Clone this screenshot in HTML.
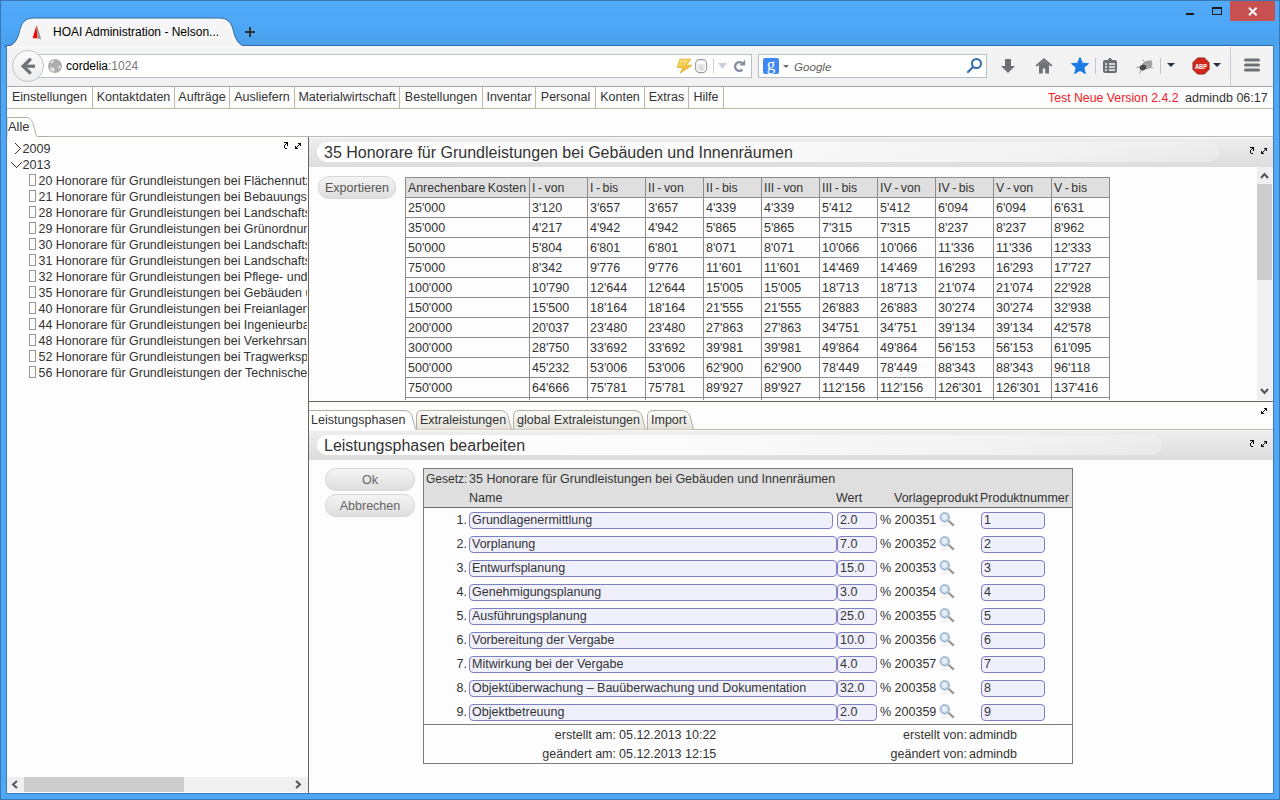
<!DOCTYPE html>
<html><head><meta charset="utf-8">
<style>
*{box-sizing:border-box;margin:0;padding:0}
html,body{width:1280px;height:800px;overflow:hidden}
body{position:relative;background:#4fa7f5;font-family:"Liberation Sans",sans-serif;font-size:12.5px;color:#333}
.a{position:absolute}
.frame{left:0;top:0;width:1280px;height:800px;border:1px solid #3a78b5}
.inner{left:6px;top:45px;width:1268px;height:749px;border:1px solid #3a7cbc;border-top-color:#2b69a6}
.tb{left:7px;top:46px;width:1266px;height:41px;background:linear-gradient(#fafafa,#f3f3f3 3px,#f1f1f1);border-bottom:1px solid #a8a8a8}
.page{left:7px;top:87px;width:1266px;height:706px;background:#fdfdfd;overflow:hidden}
.sep{width:1px;background:#bdb9aa}
.mi{top:0;height:21px;line-height:20px;text-align:center;white-space:nowrap;border-right:1px solid #bdb9aa}
.tri{width:0;height:0;border-left:4px solid transparent;border-right:4px solid transparent;border-top:4px solid #333}
.ico{stroke:#000;fill:none}
</style></head><body>
<div class="a frame"></div>
<div class="a" style="left:1px;top:1px;width:1278px;height:44px;background:linear-gradient(#52aaf8,#4ca6f6 60%,#4aa0ea)"></div>
<div class="a inner"></div>

<!-- browser tab -->
<svg class="a" style="left:0;top:0" width="280" height="47">
<path d="M4 47 C13 47 17 41 19 33 C21.5 22 25 18 34 18 L219 18 C228 18 231.5 22 234 33 C236 41 240 47 249 47 Z" fill="#f5f5f5"/>
<path d="M4 46.5 C13 46.5 17 41 19 33 C21.5 22 25 18 34 18 L219 18 C228 18 231.5 22 234 33 C236 41 240 46.5 249 46.5" fill="none" stroke="#3469a3" stroke-width="1"/>
<path d="M7 46.5 H245" stroke="#f4f4f4" stroke-width="1"/>
<path d="M36.6 25 L37.2 38.2 L32.6 38.2 Z" fill="#f00"/>
<path d="M36.8 25 L41.3 39.6 L37.2 38.2 Z" fill="#9a9a9a"/>
<path d="M245 32 h10 M250 27 v10" stroke="#333" stroke-width="2"/>
</svg>
<div class="a" style="left:53px;top:25px;font-size:12px;color:#000;white-space:nowrap">HOAI Administration - Nelson...</div>

<!-- window controls -->
<div class="a" style="left:1186px;top:13px;width:8px;height:2px;background:#1b1b1b"></div>
<div class="a" style="left:1212px;top:7px;width:10px;height:8px;border:1px solid #1b1b1b;border-top-width:2px"></div>
<div class="a" style="left:1230px;top:1px;width:45px;height:20px;background:#c75050"></div>
<svg class="a" style="left:1248px;top:7px" width="10" height="9"><path d="M1 0.8 L8.6 8.2 M8.6 0.8 L1 8.2" stroke="#fff" stroke-width="1.9"/></svg>

<!-- toolbar -->
<div class="a tb"></div>
<div class="a" style="left:37px;top:54px;width:715px;height:24px;background:#fff;border:1px solid #b5c0cd;border-left:none"></div>
<div class="a" style="left:12px;top:50px;width:32px;height:32px;border-radius:50%;background:linear-gradient(#fbfbfb,#eeeeee);border:1px solid #c4c4c4"></div>
<svg class="a" style="left:20px;top:58px" width="17" height="17"><path d="M9.8 1.8 L3.2 8.2 L9.8 14.6" stroke="#6f7378" stroke-width="3.4" stroke-linecap="round" stroke-linejoin="miter" fill="none"/><path d="M4.5 8.2 H15" stroke="#6f7378" stroke-width="3.2"/></svg>
<svg class="a" style="left:47px;top:58px" width="16" height="16"><circle cx="8" cy="8" r="7" fill="#adadad"/><path d="M3.5 4.5 Q5 2.2 7.5 2.6 Q6.5 4.2 4.5 5.8 Z" fill="#ececec"/><path d="M11.8 6.5 Q13.8 7.5 13.6 10 Q12.5 11 11.2 10.2 Q11.8 8.5 11.8 6.5 Z" fill="#e6e6e6"/><path d="M3 9.5 Q5.5 9 7.5 10.5 Q8 12.8 6 13.8 Q3.5 12.5 3 9.5 Z" fill="#ececec"/></svg>
<div class="a" style="left:66px;top:59px;font-size:12px;color:#000;white-space:nowrap">cordelia<span style="color:#777">:1024</span></div>
<!-- url bar icons -->
<svg class="a" style="left:676px;top:58px" width="72" height="17">
<defs><linearGradient id="lg1" x1="0" y1="0" x2="1" y2="1"><stop offset="0" stop-color="#fbe27a"/><stop offset="1" stop-color="#e6aa1e"/></linearGradient><linearGradient id="cg1" x1="0" y1="0" x2="1" y2="0"><stop offset="0" stop-color="#f6f6f6"/><stop offset="0.5" stop-color="#d6d6d6"/><stop offset="1" stop-color="#f0f0f0"/></linearGradient></defs>
<path d="M4 1.2 L15 1.2 L10.2 7.3 L16 7.3 L4.3 15 L7 9.5 L1.2 9.5 Z" fill="url(#lg1)" stroke="#e3b22c" stroke-width="0.9" stroke-linejoin="round"/>
<path d="M5.5 3 L11.5 3 L8 7.8" fill="none" stroke="#fff3b0" stroke-width="0.8" opacity="0.7"/>
<rect x="19.6" y="1.6" width="11" height="13" rx="4" fill="#fcfcfc" stroke="#9c9c9c" stroke-width="1.1"/>
<path d="M21 5.5 Q25.1 7.5 29.2 5.5 V12 Q25.1 13.5 21 12 Z" fill="url(#cg1)"/>
<path d="M37.5 0 V16" stroke="#ccd3db"/>
<path d="M42 5 L51 5 L46.5 11 Z" fill="#c8d0d8"/>
<path d="M66.2 5.2 A4.3 4.3 0 1 0 66.4 11.6" stroke="#8490a0" stroke-width="2.4" fill="none"/><path d="M63.4 7.6 L69.2 7.6 L69.2 1.8 Z" fill="#8490a0"/></svg>
<div class="a" style="left:758px;top:54px;width:229px;height:24px;background:#fff;border:1px solid #b5c0cd"></div>
<div class="a" style="left:763px;top:58px;width:16px;height:16px;background:#3f87f2;border-radius:2px;color:#fff;font-size:17px;line-height:14px;text-align:center;font-family:'Liberation Serif',serif">g</div>
<div class="a tri" style="left:783px;top:65px;border-width:3px;border-top-color:#666"></div>
<div class="a" style="left:794px;top:60px;font-size:11.6px;font-style:italic;color:#5e5e5e">Google</div>
<svg class="a" style="left:966px;top:57px" width="17" height="17"><circle cx="10.5" cy="6.5" r="4.5" stroke="#2e6db0" stroke-width="2" fill="none"/><path d="M7 10 L2 15" stroke="#2e6db0" stroke-width="2.2" stroke-linecap="round"/></svg>
<!-- right icons -->
<svg class="a" style="left:1000px;top:58px" width="17" height="17"><path d="M5 1 H11 V8 H15 L8 15 L1 8 H5 Z" fill="#6d7075"/></svg>
<svg class="a" style="left:1035px;top:58px" width="18" height="18"><path d="M1.2 8 L9 1.2 L16.8 8" stroke="#6f7378" stroke-width="1.8" fill="none"/><path d="M4 6.5 L9 2.8 L14 6.5 V15.5 H10.2 V10.5 H7.8 V15.5 H4 Z" fill="#6f7378"/></svg>
<svg class="a" style="left:1071px;top:57px" width="18" height="18"><path d="M9 0.5 L11.4 6.2 L17.5 6.6 L12.8 10.6 L14.3 16.6 L9 13.4 L3.7 16.6 L5.2 10.6 L0.5 6.6 L6.6 6.2 Z" fill="#1a7ae6" stroke="#1a7ae6" stroke-linejoin="round"/></svg>
<div class="a" style="left:1095px;top:58px;width:1px;height:16px;background:#c0c6cc"></div>
<svg class="a" style="left:1102px;top:57px" width="16" height="17"><rect x="1" y="3" width="14" height="13" rx="2" fill="#6d7075"/><path d="M6 3 L8 1 L10 3" fill="#6d7075" stroke="#6d7075"/><path d="M3 7 H5 M7 7 H13 M3 10 H5 M7 10 H13 M3 13 H5 M7 13 H13" stroke="#f2f2f2" stroke-width="1.3"/></svg>
<svg class="a" style="left:1136px;top:59px" width="18" height="15"><path d="M0.5 8.5 L4 8 M5 11.5 L3.5 14.5 M13 8 L17 9 M13 3 L16 1.5 M8 2.5 L7 0.5" stroke="#8a8a8a" stroke-width="0.9"/><ellipse cx="11" cy="6" rx="5.2" ry="3.4" fill="#b4b4b4" stroke="#7a7a7a" stroke-width="0.8" transform="rotate(-25 11 6)"/><ellipse cx="7" cy="8.5" rx="3.4" ry="2.8" fill="#4a4a4a" transform="rotate(-25 7 8.5)"/><path d="M9 5 L14 4 M9.5 7 L14.5 6" stroke="#777" stroke-width="0.6"/></svg>
<div class="a" style="left:1160px;top:58px;width:1px;height:16px;background:#c0c6cc"></div>
<div class="a tri" style="left:1167px;top:63px;border-left-width:4px;border-right-width:4px;border-top:4px solid #263340"></div>
<svg class="a" style="left:1192px;top:57px" width="18" height="18"><path d="M5.6 1 H12.4 L17 5.6 V12.4 L12.4 17 H5.6 L1 12.4 V5.6 Z" fill="#d0281c" stroke="#9a1c14" stroke-width="1"/><text x="9" y="11.8" font-size="7" font-weight="bold" fill="#fff" text-anchor="middle" font-family="Liberation Sans" transform="translate(9 0) scale(0.82 1) translate(-9 0)">ABP</text></svg>
<div class="a tri" style="left:1213px;top:63px;border-left-width:4px;border-right-width:4px;border-top:4px solid #263340"></div>
<div class="a" style="left:1230px;top:47px;width:1px;height:39px;background:#c8cdd2"></div>
<svg class="a" style="left:1243px;top:57px" width="18" height="16"><path d="M2.5 3 H15.5 M2.5 8 H15.5 M2.5 13 H15.5" stroke="#6d7075" stroke-width="3" stroke-linecap="round"/></svg>

<!-- page -->
<div class="a" style="left:7px;top:87px;width:1266px;height:706px;background:#fdfdfd"></div>
<div class="a" style="left:7px;top:108px;width:1266px;height:1px;background:#bdb9aa"></div>
<div class="a" style="left:7px;top:87px;width:85px;height:21px;line-height:21px;text-align:center;white-space:nowrap">Einstellungen</div>
<div class="a" style="left:92px;top:87px;width:1px;height:21px;background:#bdb9aa"></div>
<div class="a" style="left:93px;top:87px;width:81px;height:21px;line-height:21px;text-align:center;white-space:nowrap">Kontaktdaten</div>
<div class="a" style="left:174px;top:87px;width:1px;height:21px;background:#bdb9aa"></div>
<div class="a" style="left:175px;top:87px;width:54px;height:21px;line-height:21px;text-align:center;white-space:nowrap">Aufträge</div>
<div class="a" style="left:229px;top:87px;width:1px;height:21px;background:#bdb9aa"></div>
<div class="a" style="left:230px;top:87px;width:64px;height:21px;line-height:21px;text-align:center;white-space:nowrap">Ausliefern</div>
<div class="a" style="left:294px;top:87px;width:1px;height:21px;background:#bdb9aa"></div>
<div class="a" style="left:295px;top:87px;width:104px;height:21px;line-height:21px;text-align:center;white-space:nowrap">Materialwirtschaft</div>
<div class="a" style="left:399px;top:87px;width:1px;height:21px;background:#bdb9aa"></div>
<div class="a" style="left:400px;top:87px;width:82px;height:21px;line-height:21px;text-align:center;white-space:nowrap">Bestellungen</div>
<div class="a" style="left:482px;top:87px;width:1px;height:21px;background:#bdb9aa"></div>
<div class="a" style="left:483px;top:87px;width:52px;height:21px;line-height:21px;text-align:center;white-space:nowrap">Inventar</div>
<div class="a" style="left:535px;top:87px;width:1px;height:21px;background:#bdb9aa"></div>
<div class="a" style="left:536px;top:87px;width:59px;height:21px;line-height:21px;text-align:center;white-space:nowrap">Personal</div>
<div class="a" style="left:595px;top:87px;width:1px;height:21px;background:#bdb9aa"></div>
<div class="a" style="left:596px;top:87px;width:48px;height:21px;line-height:21px;text-align:center;white-space:nowrap">Konten</div>
<div class="a" style="left:644px;top:87px;width:1px;height:21px;background:#bdb9aa"></div>
<div class="a" style="left:645px;top:87px;width:43px;height:21px;line-height:21px;text-align:center;white-space:nowrap">Extras</div>
<div class="a" style="left:688px;top:87px;width:1px;height:21px;background:#bdb9aa"></div>
<div class="a" style="left:689px;top:87px;width:34px;height:21px;line-height:21px;text-align:center;white-space:nowrap">Hilfe</div>
<div class="a" style="left:723px;top:87px;width:1px;height:21px;background:#bdb9aa"></div>
<div class="a" style="left:1048px;top:88px;height:21px;line-height:21px;white-space:nowrap;color:#f0201e;font-size:12.3px">Test Neue Version 2.4.2</div>
<div class="a" style="left:1185px;top:88px;height:21px;line-height:21px;white-space:nowrap">admindb 06:17</div>
<div class="a" style="left:40px;top:136px;width:1233px;height:1px;background:#bdb9aa"></div>
<svg class="a" style="left:7px;top:116px" width="40" height="22"><path d="M0 21 V3 Q0 1.5 1.5 1.5 H19 C23 1.5 25 4 26.5 9 L28.5 17 C29 19.5 29.5 20.5 31 20.5 H40" fill="#ffffff" stroke="#b3af9f" stroke-width="1"/></svg>
<div class="a" style="left:8px;top:116px;height:19px;line-height:21px;white-space:nowrap;font-size:12.8px">Alle</div>
<div class="a" style="left:308px;top:137px;width:1px;height:656px;background:#65635b"></div>
<svg class="a" style="left:284px;top:142px" width="4" height="7" shape-rendering="crispEdges" fill="#000"><rect x="0" y="0" width="1" height="1"/><rect x="1" y="0" width="1" height="1"/><rect x="2" y="0" width="1" height="1"/><rect x="3" y="0" width="1" height="1"/><rect x="2" y="1" width="1" height="1"/><rect x="3" y="1" width="1" height="1"/><rect x="1" y="2" width="1" height="1"/><rect x="3" y="2" width="1" height="1"/><rect x="0" y="3" width="1" height="1"/><rect x="3" y="3" width="1" height="1"/><rect x="0" y="4" width="1" height="1"/><rect x="0" y="5" width="1" height="1"/><rect x="1" y="6" width="1" height="1"/><rect x="2" y="6" width="1" height="1"/></svg>
<svg class="a" style="left:295px;top:143px" width="6" height="6" shape-rendering="crispEdges" fill="#111"><rect x="3" y="0" width="1" height="1"/><rect x="4" y="0" width="1" height="1"/><rect x="5" y="0" width="1" height="1"/><rect x="4" y="1" width="1" height="1"/><rect x="5" y="1" width="1" height="1"/><rect x="3" y="2" width="1" height="1"/><rect x="5" y="2" width="1" height="1"/><rect x="0" y="3" width="1" height="1"/><rect x="2" y="3" width="1" height="1"/><rect x="0" y="4" width="1" height="1"/><rect x="1" y="4" width="1" height="1"/><rect x="0" y="5" width="1" height="1"/><rect x="1" y="5" width="1" height="1"/><rect x="2" y="5" width="1" height="1"/></svg>
<svg class="a" style="left:15px;top:143px" width="6" height="11" shape-rendering="crispEdges" fill="#333"><rect x="0" y="0" width="1" height="1"/><rect x="1" y="1" width="1" height="1"/><rect x="2" y="2" width="1" height="1"/><rect x="3" y="3" width="1" height="1"/><rect x="4" y="4" width="1" height="1"/><rect x="5" y="5" width="1" height="1"/><rect x="4" y="6" width="1" height="1"/><rect x="3" y="7" width="1" height="1"/><rect x="2" y="8" width="1" height="1"/><rect x="1" y="9" width="1" height="1"/><rect x="0" y="10" width="1" height="1"/></svg>
<div class="a" style="left:22.5px;top:141px;height:16px;line-height:16px;font-size:12.6px">2009</div>
<svg class="a" style="left:11px;top:162px" width="11" height="6" shape-rendering="crispEdges" fill="#333"><rect x="0" y="0" width="1" height="1"/><rect x="1" y="1" width="1" height="1"/><rect x="2" y="2" width="1" height="1"/><rect x="3" y="3" width="1" height="1"/><rect x="4" y="4" width="1" height="1"/><rect x="5" y="5" width="1" height="1"/><rect x="6" y="4" width="1" height="1"/><rect x="7" y="3" width="1" height="1"/><rect x="8" y="2" width="1" height="1"/><rect x="9" y="1" width="1" height="1"/><rect x="10" y="0" width="1" height="1"/></svg>
<div class="a" style="left:22.5px;top:157px;height:16px;line-height:16px;font-size:12.6px">2013</div>
<div class="a" style="left:7px;top:137px;width:300px;height:640px;overflow:hidden">
<div class="a" style="left:22px;top:37px;width:7px;height:12px;border:1px solid #969696"></div>
<div class="a" style="left:31.5px;top:36px;height:16px;line-height:16px;white-space:nowrap;font-size:12.45px">20 Honorare für Grundleistungen bei Flächennutzungsplänen</div>
<div class="a" style="left:22px;top:53px;width:7px;height:12px;border:1px solid #969696"></div>
<div class="a" style="left:31.5px;top:52px;height:16px;line-height:16px;white-space:nowrap;font-size:12.45px">21 Honorare für Grundleistungen bei Bebauungsplänen</div>
<div class="a" style="left:22px;top:69px;width:7px;height:12px;border:1px solid #969696"></div>
<div class="a" style="left:31.5px;top:68px;height:16px;line-height:16px;white-space:nowrap;font-size:12.45px">28 Honorare für Grundleistungen bei Landschaftsplänen</div>
<div class="a" style="left:22px;top:85px;width:7px;height:12px;border:1px solid #969696"></div>
<div class="a" style="left:31.5px;top:84px;height:16px;line-height:16px;white-space:nowrap;font-size:12.45px">29 Honorare für Grundleistungen bei Grünordnungsplänen</div>
<div class="a" style="left:22px;top:101px;width:7px;height:12px;border:1px solid #969696"></div>
<div class="a" style="left:31.5px;top:100px;height:16px;line-height:16px;white-space:nowrap;font-size:12.45px">30 Honorare für Grundleistungen bei Landschaftsrahmenplänen</div>
<div class="a" style="left:22px;top:117px;width:7px;height:12px;border:1px solid #969696"></div>
<div class="a" style="left:31.5px;top:116px;height:16px;line-height:16px;white-space:nowrap;font-size:12.45px">31 Honorare für Grundleistungen bei Landschaftspflegerischen</div>
<div class="a" style="left:22px;top:133px;width:7px;height:12px;border:1px solid #969696"></div>
<div class="a" style="left:31.5px;top:132px;height:16px;line-height:16px;white-space:nowrap;font-size:12.45px">32 Honorare für Grundleistungen bei Pflege- und Entwicklungsplänen</div>
<div class="a" style="left:22px;top:149px;width:7px;height:12px;border:1px solid #969696"></div>
<div class="a" style="left:31.5px;top:148px;height:16px;line-height:16px;white-space:nowrap;font-size:12.45px">35 Honorare für Grundleistungen bei Gebäuden und Innenräumen</div>
<div class="a" style="left:22px;top:165px;width:7px;height:12px;border:1px solid #969696"></div>
<div class="a" style="left:31.5px;top:164px;height:16px;line-height:16px;white-space:nowrap;font-size:12.45px">40 Honorare für Grundleistungen bei Freianlagen</div>
<div class="a" style="left:22px;top:181px;width:7px;height:12px;border:1px solid #969696"></div>
<div class="a" style="left:31.5px;top:180px;height:16px;line-height:16px;white-space:nowrap;font-size:12.45px">44 Honorare für Grundleistungen bei Ingenieurbauwerken</div>
<div class="a" style="left:22px;top:197px;width:7px;height:12px;border:1px solid #969696"></div>
<div class="a" style="left:31.5px;top:196px;height:16px;line-height:16px;white-space:nowrap;font-size:12.45px">48 Honorare für Grundleistungen bei Verkehrsanlagen</div>
<div class="a" style="left:22px;top:213px;width:7px;height:12px;border:1px solid #969696"></div>
<div class="a" style="left:31.5px;top:212px;height:16px;line-height:16px;white-space:nowrap;font-size:12.45px">52 Honorare für Grundleistungen bei Tragwerksplanungen</div>
<div class="a" style="left:22px;top:229px;width:7px;height:12px;border:1px solid #969696"></div>
<div class="a" style="left:31.5px;top:228px;height:16px;line-height:16px;white-space:nowrap;font-size:12.45px">56 Honorare für Grundleistungen der Technischen Ausrüstung</div>
</div>
<div class="a" style="left:7px;top:777px;width:301px;height:15px;background:#f0f0f0"></div>
<div class="a" style="left:24px;top:777px;width:160px;height:15px;background:#cdcdcd"></div>
<svg class="a" style="left:11px;top:780px" width="8" height="10"><path d="M6 1 L2 4.5 L6 8" stroke="#555" stroke-width="2" fill="none"/></svg>
<svg class="a" style="left:294px;top:780px" width="8" height="10"><path d="M2 1 L6 4.5 L2 8" stroke="#555" stroke-width="2" fill="none"/></svg>
<div class="a" style="left:309px;top:137px;width:964px;height:30px;background:linear-gradient(#eeeeee,#dddddd)"></div>
<div class="a" style="left:309px;top:137px;width:964px;height:1px;background:#fafafa"></div>
<div class="a" style="left:317px;top:142px;width:903px;height:20px;border-radius:10px;background:linear-gradient(90deg,#ffffff 0%,#fafafa 45%,rgba(246,246,246,0.8) 80%,rgba(240,240,240,0.5) 100%)"></div>
<div class="a" style="left:324px;top:143px;height:20px;line-height:20px;font-size:16px;white-space:nowrap">35 Honorare für Grundleistungen bei Gebäuden und Innenräumen</div>
<svg class="a" style="left:1250px;top:147px" width="4" height="7" shape-rendering="crispEdges" fill="#000"><rect x="0" y="0" width="1" height="1"/><rect x="1" y="0" width="1" height="1"/><rect x="2" y="0" width="1" height="1"/><rect x="3" y="0" width="1" height="1"/><rect x="2" y="1" width="1" height="1"/><rect x="3" y="1" width="1" height="1"/><rect x="1" y="2" width="1" height="1"/><rect x="3" y="2" width="1" height="1"/><rect x="0" y="3" width="1" height="1"/><rect x="3" y="3" width="1" height="1"/><rect x="0" y="4" width="1" height="1"/><rect x="0" y="5" width="1" height="1"/><rect x="1" y="6" width="1" height="1"/><rect x="2" y="6" width="1" height="1"/></svg>
<svg class="a" style="left:1261px;top:148px" width="6" height="6" shape-rendering="crispEdges" fill="#111"><rect x="3" y="0" width="1" height="1"/><rect x="4" y="0" width="1" height="1"/><rect x="5" y="0" width="1" height="1"/><rect x="4" y="1" width="1" height="1"/><rect x="5" y="1" width="1" height="1"/><rect x="3" y="2" width="1" height="1"/><rect x="5" y="2" width="1" height="1"/><rect x="0" y="3" width="1" height="1"/><rect x="2" y="3" width="1" height="1"/><rect x="0" y="4" width="1" height="1"/><rect x="1" y="4" width="1" height="1"/><rect x="0" y="5" width="1" height="1"/><rect x="1" y="5" width="1" height="1"/><rect x="2" y="5" width="1" height="1"/></svg>
<div class="a" style="left:1257px;top:167px;width:15px;height:233px;background:#f0f0f0"></div>
<div class="a" style="left:1257px;top:184px;width:15px;height:96px;background:#cdcdcd"></div>
<svg class="a" style="left:1260px;top:172px" width="10" height="8"><path d="M1 6 L4.5 2 L8 6" stroke="#555" stroke-width="2" fill="none"/></svg>
<svg class="a" style="left:1260px;top:387px" width="10" height="8"><path d="M1 2 L4.5 6 L8 2" stroke="#555" stroke-width="2" fill="none"/></svg>
<div class="a" style="left:318px;top:176px;width:78px;height:23px;border-radius:11px;background:linear-gradient(#f4f4f4,#dedede);border:1px solid #d6d6d6;color:#555;text-align:center;line-height:23px;white-space:nowrap">Exportieren</div>
<div class="a" style="left:309px;top:167px;width:948px;height:233px;overflow:hidden">
<div class="a" style="left:96px;top:10px;width:704px;height:20px;background:#dfdfdf"></div>
<div class="a" style="left:96px;top:10px;width:705px;height:1px;background:#8c8c8c"></div>
<div class="a" style="left:96px;top:30px;width:705px;height:1px;background:#8c8c8c"></div>
<div class="a" style="left:96px;top:50px;width:705px;height:1px;background:#8c8c8c"></div>
<div class="a" style="left:96px;top:70px;width:705px;height:1px;background:#8c8c8c"></div>
<div class="a" style="left:96px;top:90px;width:705px;height:1px;background:#8c8c8c"></div>
<div class="a" style="left:96px;top:110px;width:705px;height:1px;background:#8c8c8c"></div>
<div class="a" style="left:96px;top:130px;width:705px;height:1px;background:#8c8c8c"></div>
<div class="a" style="left:96px;top:150px;width:705px;height:1px;background:#8c8c8c"></div>
<div class="a" style="left:96px;top:170px;width:705px;height:1px;background:#8c8c8c"></div>
<div class="a" style="left:96px;top:190px;width:705px;height:1px;background:#8c8c8c"></div>
<div class="a" style="left:96px;top:210px;width:705px;height:1px;background:#8c8c8c"></div>
<div class="a" style="left:96px;top:230px;width:705px;height:1px;background:#8c8c8c"></div>
<div class="a" style="left:96px;top:250px;width:705px;height:1px;background:#8c8c8c"></div>
<div class="a" style="left:96px;top:10px;width:1px;height:260px;background:#8c8c8c"></div>
<div class="a" style="left:220px;top:10px;width:1px;height:260px;background:#8c8c8c"></div>
<div class="a" style="left:278px;top:10px;width:1px;height:260px;background:#8c8c8c"></div>
<div class="a" style="left:336px;top:10px;width:1px;height:260px;background:#8c8c8c"></div>
<div class="a" style="left:394px;top:10px;width:1px;height:260px;background:#8c8c8c"></div>
<div class="a" style="left:452px;top:10px;width:1px;height:260px;background:#8c8c8c"></div>
<div class="a" style="left:510px;top:10px;width:1px;height:260px;background:#8c8c8c"></div>
<div class="a" style="left:568px;top:10px;width:1px;height:260px;background:#8c8c8c"></div>
<div class="a" style="left:626px;top:10px;width:1px;height:260px;background:#8c8c8c"></div>
<div class="a" style="left:684px;top:10px;width:1px;height:260px;background:#8c8c8c"></div>
<div class="a" style="left:742px;top:10px;width:1px;height:260px;background:#8c8c8c"></div>
<div class="a" style="left:800px;top:10px;width:1px;height:260px;background:#8c8c8c"></div>
<div class="a" style="left:99px;top:11px;height:20px;line-height:20px;white-space:nowrap;font-size:12.3px;word-spacing:-0.9px">Anrechenbare Kosten</div>
<div class="a" style="left:223px;top:11px;height:20px;line-height:20px;white-space:nowrap;font-size:12.3px;word-spacing:-0.9px">I - von</div>
<div class="a" style="left:281px;top:11px;height:20px;line-height:20px;white-space:nowrap;font-size:12.3px;word-spacing:-0.9px">I - bis</div>
<div class="a" style="left:339px;top:11px;height:20px;line-height:20px;white-space:nowrap;font-size:12.3px;word-spacing:-0.9px">II - von</div>
<div class="a" style="left:397px;top:11px;height:20px;line-height:20px;white-space:nowrap;font-size:12.3px;word-spacing:-0.9px">II - bis</div>
<div class="a" style="left:455px;top:11px;height:20px;line-height:20px;white-space:nowrap;font-size:12.3px;word-spacing:-0.9px">III - von</div>
<div class="a" style="left:513px;top:11px;height:20px;line-height:20px;white-space:nowrap;font-size:12.3px;word-spacing:-0.9px">III - bis</div>
<div class="a" style="left:571px;top:11px;height:20px;line-height:20px;white-space:nowrap;font-size:12.3px;word-spacing:-0.9px">IV - von</div>
<div class="a" style="left:629px;top:11px;height:20px;line-height:20px;white-space:nowrap;font-size:12.3px;word-spacing:-0.9px">IV - bis</div>
<div class="a" style="left:687px;top:11px;height:20px;line-height:20px;white-space:nowrap;font-size:12.3px;word-spacing:-0.9px">V - von</div>
<div class="a" style="left:745px;top:11px;height:20px;line-height:20px;white-space:nowrap;font-size:12.3px;word-spacing:-0.9px">V - bis</div>
<div class="a" style="left:99px;top:31px;height:20px;line-height:20px;white-space:nowrap">25'000</div>
<div class="a" style="left:223px;top:31px;height:20px;line-height:20px;white-space:nowrap">3'120</div>
<div class="a" style="left:281px;top:31px;height:20px;line-height:20px;white-space:nowrap">3'657</div>
<div class="a" style="left:339px;top:31px;height:20px;line-height:20px;white-space:nowrap">3'657</div>
<div class="a" style="left:397px;top:31px;height:20px;line-height:20px;white-space:nowrap">4'339</div>
<div class="a" style="left:455px;top:31px;height:20px;line-height:20px;white-space:nowrap">4'339</div>
<div class="a" style="left:513px;top:31px;height:20px;line-height:20px;white-space:nowrap">5'412</div>
<div class="a" style="left:571px;top:31px;height:20px;line-height:20px;white-space:nowrap">5'412</div>
<div class="a" style="left:629px;top:31px;height:20px;line-height:20px;white-space:nowrap">6'094</div>
<div class="a" style="left:687px;top:31px;height:20px;line-height:20px;white-space:nowrap">6'094</div>
<div class="a" style="left:745px;top:31px;height:20px;line-height:20px;white-space:nowrap">6'631</div>
<div class="a" style="left:99px;top:51px;height:20px;line-height:20px;white-space:nowrap">35'000</div>
<div class="a" style="left:223px;top:51px;height:20px;line-height:20px;white-space:nowrap">4'217</div>
<div class="a" style="left:281px;top:51px;height:20px;line-height:20px;white-space:nowrap">4'942</div>
<div class="a" style="left:339px;top:51px;height:20px;line-height:20px;white-space:nowrap">4'942</div>
<div class="a" style="left:397px;top:51px;height:20px;line-height:20px;white-space:nowrap">5'865</div>
<div class="a" style="left:455px;top:51px;height:20px;line-height:20px;white-space:nowrap">5'865</div>
<div class="a" style="left:513px;top:51px;height:20px;line-height:20px;white-space:nowrap">7'315</div>
<div class="a" style="left:571px;top:51px;height:20px;line-height:20px;white-space:nowrap">7'315</div>
<div class="a" style="left:629px;top:51px;height:20px;line-height:20px;white-space:nowrap">8'237</div>
<div class="a" style="left:687px;top:51px;height:20px;line-height:20px;white-space:nowrap">8'237</div>
<div class="a" style="left:745px;top:51px;height:20px;line-height:20px;white-space:nowrap">8'962</div>
<div class="a" style="left:99px;top:71px;height:20px;line-height:20px;white-space:nowrap">50'000</div>
<div class="a" style="left:223px;top:71px;height:20px;line-height:20px;white-space:nowrap">5'804</div>
<div class="a" style="left:281px;top:71px;height:20px;line-height:20px;white-space:nowrap">6'801</div>
<div class="a" style="left:339px;top:71px;height:20px;line-height:20px;white-space:nowrap">6'801</div>
<div class="a" style="left:397px;top:71px;height:20px;line-height:20px;white-space:nowrap">8'071</div>
<div class="a" style="left:455px;top:71px;height:20px;line-height:20px;white-space:nowrap">8'071</div>
<div class="a" style="left:513px;top:71px;height:20px;line-height:20px;white-space:nowrap">10'066</div>
<div class="a" style="left:571px;top:71px;height:20px;line-height:20px;white-space:nowrap">10'066</div>
<div class="a" style="left:629px;top:71px;height:20px;line-height:20px;white-space:nowrap">11'336</div>
<div class="a" style="left:687px;top:71px;height:20px;line-height:20px;white-space:nowrap">11'336</div>
<div class="a" style="left:745px;top:71px;height:20px;line-height:20px;white-space:nowrap">12'333</div>
<div class="a" style="left:99px;top:91px;height:20px;line-height:20px;white-space:nowrap">75'000</div>
<div class="a" style="left:223px;top:91px;height:20px;line-height:20px;white-space:nowrap">8'342</div>
<div class="a" style="left:281px;top:91px;height:20px;line-height:20px;white-space:nowrap">9'776</div>
<div class="a" style="left:339px;top:91px;height:20px;line-height:20px;white-space:nowrap">9'776</div>
<div class="a" style="left:397px;top:91px;height:20px;line-height:20px;white-space:nowrap">11'601</div>
<div class="a" style="left:455px;top:91px;height:20px;line-height:20px;white-space:nowrap">11'601</div>
<div class="a" style="left:513px;top:91px;height:20px;line-height:20px;white-space:nowrap">14'469</div>
<div class="a" style="left:571px;top:91px;height:20px;line-height:20px;white-space:nowrap">14'469</div>
<div class="a" style="left:629px;top:91px;height:20px;line-height:20px;white-space:nowrap">16'293</div>
<div class="a" style="left:687px;top:91px;height:20px;line-height:20px;white-space:nowrap">16'293</div>
<div class="a" style="left:745px;top:91px;height:20px;line-height:20px;white-space:nowrap">17'727</div>
<div class="a" style="left:99px;top:111px;height:20px;line-height:20px;white-space:nowrap">100'000</div>
<div class="a" style="left:223px;top:111px;height:20px;line-height:20px;white-space:nowrap">10'790</div>
<div class="a" style="left:281px;top:111px;height:20px;line-height:20px;white-space:nowrap">12'644</div>
<div class="a" style="left:339px;top:111px;height:20px;line-height:20px;white-space:nowrap">12'644</div>
<div class="a" style="left:397px;top:111px;height:20px;line-height:20px;white-space:nowrap">15'005</div>
<div class="a" style="left:455px;top:111px;height:20px;line-height:20px;white-space:nowrap">15'005</div>
<div class="a" style="left:513px;top:111px;height:20px;line-height:20px;white-space:nowrap">18'713</div>
<div class="a" style="left:571px;top:111px;height:20px;line-height:20px;white-space:nowrap">18'713</div>
<div class="a" style="left:629px;top:111px;height:20px;line-height:20px;white-space:nowrap">21'074</div>
<div class="a" style="left:687px;top:111px;height:20px;line-height:20px;white-space:nowrap">21'074</div>
<div class="a" style="left:745px;top:111px;height:20px;line-height:20px;white-space:nowrap">22'928</div>
<div class="a" style="left:99px;top:131px;height:20px;line-height:20px;white-space:nowrap">150'000</div>
<div class="a" style="left:223px;top:131px;height:20px;line-height:20px;white-space:nowrap">15'500</div>
<div class="a" style="left:281px;top:131px;height:20px;line-height:20px;white-space:nowrap">18'164</div>
<div class="a" style="left:339px;top:131px;height:20px;line-height:20px;white-space:nowrap">18'164</div>
<div class="a" style="left:397px;top:131px;height:20px;line-height:20px;white-space:nowrap">21'555</div>
<div class="a" style="left:455px;top:131px;height:20px;line-height:20px;white-space:nowrap">21'555</div>
<div class="a" style="left:513px;top:131px;height:20px;line-height:20px;white-space:nowrap">26'883</div>
<div class="a" style="left:571px;top:131px;height:20px;line-height:20px;white-space:nowrap">26'883</div>
<div class="a" style="left:629px;top:131px;height:20px;line-height:20px;white-space:nowrap">30'274</div>
<div class="a" style="left:687px;top:131px;height:20px;line-height:20px;white-space:nowrap">30'274</div>
<div class="a" style="left:745px;top:131px;height:20px;line-height:20px;white-space:nowrap">32'938</div>
<div class="a" style="left:99px;top:151px;height:20px;line-height:20px;white-space:nowrap">200'000</div>
<div class="a" style="left:223px;top:151px;height:20px;line-height:20px;white-space:nowrap">20'037</div>
<div class="a" style="left:281px;top:151px;height:20px;line-height:20px;white-space:nowrap">23'480</div>
<div class="a" style="left:339px;top:151px;height:20px;line-height:20px;white-space:nowrap">23'480</div>
<div class="a" style="left:397px;top:151px;height:20px;line-height:20px;white-space:nowrap">27'863</div>
<div class="a" style="left:455px;top:151px;height:20px;line-height:20px;white-space:nowrap">27'863</div>
<div class="a" style="left:513px;top:151px;height:20px;line-height:20px;white-space:nowrap">34'751</div>
<div class="a" style="left:571px;top:151px;height:20px;line-height:20px;white-space:nowrap">34'751</div>
<div class="a" style="left:629px;top:151px;height:20px;line-height:20px;white-space:nowrap">39'134</div>
<div class="a" style="left:687px;top:151px;height:20px;line-height:20px;white-space:nowrap">39'134</div>
<div class="a" style="left:745px;top:151px;height:20px;line-height:20px;white-space:nowrap">42'578</div>
<div class="a" style="left:99px;top:171px;height:20px;line-height:20px;white-space:nowrap">300'000</div>
<div class="a" style="left:223px;top:171px;height:20px;line-height:20px;white-space:nowrap">28'750</div>
<div class="a" style="left:281px;top:171px;height:20px;line-height:20px;white-space:nowrap">33'692</div>
<div class="a" style="left:339px;top:171px;height:20px;line-height:20px;white-space:nowrap">33'692</div>
<div class="a" style="left:397px;top:171px;height:20px;line-height:20px;white-space:nowrap">39'981</div>
<div class="a" style="left:455px;top:171px;height:20px;line-height:20px;white-space:nowrap">39'981</div>
<div class="a" style="left:513px;top:171px;height:20px;line-height:20px;white-space:nowrap">49'864</div>
<div class="a" style="left:571px;top:171px;height:20px;line-height:20px;white-space:nowrap">49'864</div>
<div class="a" style="left:629px;top:171px;height:20px;line-height:20px;white-space:nowrap">56'153</div>
<div class="a" style="left:687px;top:171px;height:20px;line-height:20px;white-space:nowrap">56'153</div>
<div class="a" style="left:745px;top:171px;height:20px;line-height:20px;white-space:nowrap">61'095</div>
<div class="a" style="left:99px;top:191px;height:20px;line-height:20px;white-space:nowrap">500'000</div>
<div class="a" style="left:223px;top:191px;height:20px;line-height:20px;white-space:nowrap">45'232</div>
<div class="a" style="left:281px;top:191px;height:20px;line-height:20px;white-space:nowrap">53'006</div>
<div class="a" style="left:339px;top:191px;height:20px;line-height:20px;white-space:nowrap">53'006</div>
<div class="a" style="left:397px;top:191px;height:20px;line-height:20px;white-space:nowrap">62'900</div>
<div class="a" style="left:455px;top:191px;height:20px;line-height:20px;white-space:nowrap">62'900</div>
<div class="a" style="left:513px;top:191px;height:20px;line-height:20px;white-space:nowrap">78'449</div>
<div class="a" style="left:571px;top:191px;height:20px;line-height:20px;white-space:nowrap">78'449</div>
<div class="a" style="left:629px;top:191px;height:20px;line-height:20px;white-space:nowrap">88'343</div>
<div class="a" style="left:687px;top:191px;height:20px;line-height:20px;white-space:nowrap">88'343</div>
<div class="a" style="left:745px;top:191px;height:20px;line-height:20px;white-space:nowrap">96'118</div>
<div class="a" style="left:99px;top:211px;height:20px;line-height:20px;white-space:nowrap">750'000</div>
<div class="a" style="left:223px;top:211px;height:20px;line-height:20px;white-space:nowrap">64'666</div>
<div class="a" style="left:281px;top:211px;height:20px;line-height:20px;white-space:nowrap">75'781</div>
<div class="a" style="left:339px;top:211px;height:20px;line-height:20px;white-space:nowrap">75'781</div>
<div class="a" style="left:397px;top:211px;height:20px;line-height:20px;white-space:nowrap">89'927</div>
<div class="a" style="left:455px;top:211px;height:20px;line-height:20px;white-space:nowrap">89'927</div>
<div class="a" style="left:513px;top:211px;height:20px;line-height:20px;white-space:nowrap">112'156</div>
<div class="a" style="left:571px;top:211px;height:20px;line-height:20px;white-space:nowrap">112'156</div>
<div class="a" style="left:629px;top:211px;height:20px;line-height:20px;white-space:nowrap">126'301</div>
<div class="a" style="left:687px;top:211px;height:20px;line-height:20px;white-space:nowrap">126'301</div>
<div class="a" style="left:745px;top:211px;height:20px;line-height:20px;white-space:nowrap">137'416</div>
<div class="a" style="left:99px;top:231px;height:20px;line-height:20px;white-space:nowrap">1'000'000</div>
<div class="a" style="left:223px;top:231px;height:20px;line-height:20px;white-space:nowrap">84'305</div>
<div class="a" style="left:281px;top:231px;height:20px;line-height:20px;white-space:nowrap">98'771</div>
<div class="a" style="left:339px;top:231px;height:20px;line-height:20px;white-space:nowrap">98'771</div>
<div class="a" style="left:397px;top:231px;height:20px;line-height:20px;white-space:nowrap">117'214</div>
<div class="a" style="left:455px;top:231px;height:20px;line-height:20px;white-space:nowrap">117'214</div>
<div class="a" style="left:513px;top:231px;height:20px;line-height:20px;white-space:nowrap">146'188</div>
<div class="a" style="left:571px;top:231px;height:20px;line-height:20px;white-space:nowrap">146'188</div>
<div class="a" style="left:629px;top:231px;height:20px;line-height:20px;white-space:nowrap">164'630</div>
<div class="a" style="left:687px;top:231px;height:20px;line-height:20px;white-space:nowrap">164'630</div>
<div class="a" style="left:745px;top:231px;height:20px;line-height:20px;white-space:nowrap">179'118</div>
</div>
<div class="a" style="left:309px;top:401px;width:964px;height:1px;background:#66645c"></div>
<svg class="a" style="left:1261px;top:408px" width="6" height="6" shape-rendering="crispEdges" fill="#111"><rect x="3" y="0" width="1" height="1"/><rect x="4" y="0" width="1" height="1"/><rect x="5" y="0" width="1" height="1"/><rect x="4" y="1" width="1" height="1"/><rect x="5" y="1" width="1" height="1"/><rect x="3" y="2" width="1" height="1"/><rect x="5" y="2" width="1" height="1"/><rect x="0" y="3" width="1" height="1"/><rect x="2" y="3" width="1" height="1"/><rect x="0" y="4" width="1" height="1"/><rect x="1" y="4" width="1" height="1"/><rect x="0" y="5" width="1" height="1"/><rect x="1" y="5" width="1" height="1"/><rect x="2" y="5" width="1" height="1"/></svg>
<div class="a" style="left:416px;top:429px;width:857px;height:1px;background:#bdb9aa"></div>
<svg class="a" style="left:309px;top:409px" width="109" height="22"><path d="M0 21 V1.5 H95 Q101 1.5 103 7 L106.5 21 Z" fill="#ffffff"/><path d="M0 1.5 H95 Q101 1.5 103 7 L106.5 20.5" fill="none" stroke="#b3af9f" stroke-width="1"/></svg>
<div class="a" style="left:311px;top:410px;height:20px;line-height:20px;white-space:nowrap">Leistungsphasen</div>
<svg class="a" style="left:416px;top:409px" width="98" height="22"><defs><linearGradient id="tg" x1="0" y1="0" x2="0" y2="1"><stop offset="0" stop-color="#fcfcfb"/><stop offset="1" stop-color="#e2e0d8"/></linearGradient></defs><path d="M0.5 20.5 V7 Q0.5 1.5 6 1.5 H84 Q90 1.5 92 7 L95.5 20.5" fill="url(#tg)" stroke="#b3af9f" stroke-width="1"/></svg>
<div class="a" style="left:420px;top:410px;height:20px;line-height:20px;white-space:nowrap">Extraleistungen</div>
<svg class="a" style="left:513px;top:409px" width="135" height="22"><defs><linearGradient id="tg" x1="0" y1="0" x2="0" y2="1"><stop offset="0" stop-color="#fcfcfb"/><stop offset="1" stop-color="#e2e0d8"/></linearGradient></defs><path d="M0.5 20.5 V7 Q0.5 1.5 6 1.5 H121 Q127 1.5 129 7 L132.5 20.5" fill="url(#tg)" stroke="#b3af9f" stroke-width="1"/></svg>
<div class="a" style="left:517px;top:410px;height:20px;line-height:20px;white-space:nowrap">global Extraleistungen</div>
<svg class="a" style="left:647px;top:409px" width="49" height="22"><defs><linearGradient id="tg" x1="0" y1="0" x2="0" y2="1"><stop offset="0" stop-color="#fcfcfb"/><stop offset="1" stop-color="#e2e0d8"/></linearGradient></defs><path d="M0.5 20.5 V7 Q0.5 1.5 6 1.5 H35 Q41 1.5 43 7 L46.5 20.5" fill="url(#tg)" stroke="#b3af9f" stroke-width="1"/></svg>
<div class="a" style="left:651px;top:410px;height:20px;line-height:20px;white-space:nowrap">Import</div>
<div class="a" style="left:309px;top:430px;width:964px;height:30px;background:linear-gradient(#eeeeee,#dddddd)"></div>
<div class="a" style="left:309px;top:430px;width:964px;height:1px;background:#fafafa"></div>
<div class="a" style="left:317px;top:435px;width:845px;height:20px;border-radius:10px;background:linear-gradient(90deg,#ffffff 0%,#fafafa 45%,rgba(246,246,246,0.8) 80%,rgba(240,240,240,0.5) 100%)"></div>
<div class="a" style="left:324px;top:436px;height:20px;line-height:20px;font-size:16px;white-space:nowrap">Leistungsphasen bearbeiten</div>
<svg class="a" style="left:1250px;top:440px" width="4" height="7" shape-rendering="crispEdges" fill="#000"><rect x="0" y="0" width="1" height="1"/><rect x="1" y="0" width="1" height="1"/><rect x="2" y="0" width="1" height="1"/><rect x="3" y="0" width="1" height="1"/><rect x="2" y="1" width="1" height="1"/><rect x="3" y="1" width="1" height="1"/><rect x="1" y="2" width="1" height="1"/><rect x="3" y="2" width="1" height="1"/><rect x="0" y="3" width="1" height="1"/><rect x="3" y="3" width="1" height="1"/><rect x="0" y="4" width="1" height="1"/><rect x="0" y="5" width="1" height="1"/><rect x="1" y="6" width="1" height="1"/><rect x="2" y="6" width="1" height="1"/></svg>
<svg class="a" style="left:1261px;top:441px" width="6" height="6" shape-rendering="crispEdges" fill="#111"><rect x="3" y="0" width="1" height="1"/><rect x="4" y="0" width="1" height="1"/><rect x="5" y="0" width="1" height="1"/><rect x="4" y="1" width="1" height="1"/><rect x="5" y="1" width="1" height="1"/><rect x="3" y="2" width="1" height="1"/><rect x="5" y="2" width="1" height="1"/><rect x="0" y="3" width="1" height="1"/><rect x="2" y="3" width="1" height="1"/><rect x="0" y="4" width="1" height="1"/><rect x="1" y="4" width="1" height="1"/><rect x="0" y="5" width="1" height="1"/><rect x="1" y="5" width="1" height="1"/><rect x="2" y="5" width="1" height="1"/></svg>
<div class="a" style="left:325px;top:468px;width:90px;height:23px;border-radius:11px;background:linear-gradient(#f4f4f4,#dedede);border:1px solid #d6d6d6;color:#666;text-align:center;line-height:23px;white-space:nowrap">Ok</div>
<div class="a" style="left:325px;top:494px;width:90px;height:23px;border-radius:11px;background:linear-gradient(#f4f4f4,#dedede);border:1px solid #d6d6d6;color:#666;text-align:center;line-height:23px;white-space:nowrap">Abbrechen</div>
<div class="a" style="left:423px;top:468px;width:650px;height:296px;border:1px solid #7c7c7c;background:#fdfdfd"></div>
<div class="a" style="left:424px;top:469px;width:648px;height:38px;background:#dfdfdf"></div>
<div class="a" style="left:424px;top:507px;width:648px;height:1px;background:#6e6e6e"></div>
<div class="a" style="left:424px;top:724px;width:648px;height:1px;background:#7c7c7c"></div>
<div class="a" style="left:426px;top:470px;height:18px;line-height:18px;white-space:nowrap;font-size:12px">Gesetz:</div>
<div class="a" style="left:469px;top:470px;height:18px;line-height:18px;white-space:nowrap;">35 Honorare für Grundleistungen bei Gebäuden und Innenräumen</div>
<div class="a" style="left:469px;top:489px;height:18px;line-height:18px;white-space:nowrap;">Name</div>
<div class="a" style="left:836px;top:489px;height:18px;line-height:18px;white-space:nowrap;">Wert</div>
<div class="a" style="left:894px;top:489px;height:18px;line-height:18px;white-space:nowrap;">Vorlageprodukt</div>
<div class="a" style="left:980px;top:489px;height:18px;line-height:18px;white-space:nowrap;">Produktnummer</div>
<div class="a" style="left:440px;top:512px;width:27px;height:17px;line-height:17px;text-align:right">1.</div>
<div class="a" style="left:469px;top:512px;width:364px;height:17px;border:1px solid #7f7fc4;border-radius:4px;background:#f0f0fd;padding-left:2px;line-height:15px;white-space:nowrap;overflow:hidden">Grundlagenermittlung</div>
<div class="a" style="left:837px;top:512px;width:40px;height:17px;border:1px solid #7f7fc4;border-radius:4px;background:#f0f0fd;padding-left:2px;line-height:15px;white-space:nowrap;overflow:hidden">2.0</div>
<div class="a" style="left:880px;top:512px;height:18px;line-height:18px;white-space:nowrap;line-height:17px">% 200351</div>
<svg class="a" style="left:938px;top:512px" width="18" height="17"><defs><radialGradient id="mg" cx="0.45" cy="0.45" r="0.6"><stop offset="0" stop-color="#f4f8fc"/><stop offset="1" stop-color="#c6daf0"/></radialGradient></defs><ellipse cx="7" cy="13.5" rx="5" ry="1.2" fill="#000" opacity="0.05"/><path d="M10.8 9 L15 13" stroke="#959595" stroke-width="2.4" stroke-linecap="round"/><circle cx="6.75" cy="5.3" r="5" fill="none" stroke="#c8c8c8" stroke-width="1"/><circle cx="6.75" cy="5.3" r="4" fill="url(#mg)" stroke="#86acd8" stroke-width="1.1"/></svg>
<div class="a" style="left:981px;top:512px;width:64px;height:17px;border:1px solid #7f7fc4;border-radius:4px;background:#f0f0fd;padding-left:2px;line-height:15px;white-space:nowrap;overflow:hidden">1</div>
<div class="a" style="left:440px;top:536px;width:27px;height:17px;line-height:17px;text-align:right">2.</div>
<div class="a" style="left:469px;top:536px;width:368px;height:17px;border:1px solid #7f7fc4;border-radius:4px;background:#f0f0fd;padding-left:2px;line-height:15px;white-space:nowrap;overflow:hidden">Vorplanung</div>
<div class="a" style="left:837px;top:536px;width:40px;height:17px;border:1px solid #7f7fc4;border-radius:4px;background:#f0f0fd;padding-left:2px;line-height:15px;white-space:nowrap;overflow:hidden">7.0</div>
<div class="a" style="left:880px;top:536px;height:18px;line-height:18px;white-space:nowrap;line-height:17px">% 200352</div>
<svg class="a" style="left:938px;top:536px" width="18" height="17"><defs><radialGradient id="mg" cx="0.45" cy="0.45" r="0.6"><stop offset="0" stop-color="#f4f8fc"/><stop offset="1" stop-color="#c6daf0"/></radialGradient></defs><ellipse cx="7" cy="13.5" rx="5" ry="1.2" fill="#000" opacity="0.05"/><path d="M10.8 9 L15 13" stroke="#959595" stroke-width="2.4" stroke-linecap="round"/><circle cx="6.75" cy="5.3" r="5" fill="none" stroke="#c8c8c8" stroke-width="1"/><circle cx="6.75" cy="5.3" r="4" fill="url(#mg)" stroke="#86acd8" stroke-width="1.1"/></svg>
<div class="a" style="left:981px;top:536px;width:64px;height:17px;border:1px solid #7f7fc4;border-radius:4px;background:#f0f0fd;padding-left:2px;line-height:15px;white-space:nowrap;overflow:hidden">2</div>
<div class="a" style="left:440px;top:560px;width:27px;height:17px;line-height:17px;text-align:right">3.</div>
<div class="a" style="left:469px;top:560px;width:368px;height:17px;border:1px solid #7f7fc4;border-radius:4px;background:#f0f0fd;padding-left:2px;line-height:15px;white-space:nowrap;overflow:hidden">Entwurfsplanung</div>
<div class="a" style="left:837px;top:560px;width:40px;height:17px;border:1px solid #7f7fc4;border-radius:4px;background:#f0f0fd;padding-left:2px;line-height:15px;white-space:nowrap;overflow:hidden">15.0</div>
<div class="a" style="left:880px;top:560px;height:18px;line-height:18px;white-space:nowrap;line-height:17px">% 200353</div>
<svg class="a" style="left:938px;top:560px" width="18" height="17"><defs><radialGradient id="mg" cx="0.45" cy="0.45" r="0.6"><stop offset="0" stop-color="#f4f8fc"/><stop offset="1" stop-color="#c6daf0"/></radialGradient></defs><ellipse cx="7" cy="13.5" rx="5" ry="1.2" fill="#000" opacity="0.05"/><path d="M10.8 9 L15 13" stroke="#959595" stroke-width="2.4" stroke-linecap="round"/><circle cx="6.75" cy="5.3" r="5" fill="none" stroke="#c8c8c8" stroke-width="1"/><circle cx="6.75" cy="5.3" r="4" fill="url(#mg)" stroke="#86acd8" stroke-width="1.1"/></svg>
<div class="a" style="left:981px;top:560px;width:64px;height:17px;border:1px solid #7f7fc4;border-radius:4px;background:#f0f0fd;padding-left:2px;line-height:15px;white-space:nowrap;overflow:hidden">3</div>
<div class="a" style="left:440px;top:584px;width:27px;height:17px;line-height:17px;text-align:right">4.</div>
<div class="a" style="left:469px;top:584px;width:368px;height:17px;border:1px solid #7f7fc4;border-radius:4px;background:#f0f0fd;padding-left:2px;line-height:15px;white-space:nowrap;overflow:hidden">Genehmigungsplanung</div>
<div class="a" style="left:837px;top:584px;width:40px;height:17px;border:1px solid #7f7fc4;border-radius:4px;background:#f0f0fd;padding-left:2px;line-height:15px;white-space:nowrap;overflow:hidden">3.0</div>
<div class="a" style="left:880px;top:584px;height:18px;line-height:18px;white-space:nowrap;line-height:17px">% 200354</div>
<svg class="a" style="left:938px;top:584px" width="18" height="17"><defs><radialGradient id="mg" cx="0.45" cy="0.45" r="0.6"><stop offset="0" stop-color="#f4f8fc"/><stop offset="1" stop-color="#c6daf0"/></radialGradient></defs><ellipse cx="7" cy="13.5" rx="5" ry="1.2" fill="#000" opacity="0.05"/><path d="M10.8 9 L15 13" stroke="#959595" stroke-width="2.4" stroke-linecap="round"/><circle cx="6.75" cy="5.3" r="5" fill="none" stroke="#c8c8c8" stroke-width="1"/><circle cx="6.75" cy="5.3" r="4" fill="url(#mg)" stroke="#86acd8" stroke-width="1.1"/></svg>
<div class="a" style="left:981px;top:584px;width:64px;height:17px;border:1px solid #7f7fc4;border-radius:4px;background:#f0f0fd;padding-left:2px;line-height:15px;white-space:nowrap;overflow:hidden">4</div>
<div class="a" style="left:440px;top:608px;width:27px;height:17px;line-height:17px;text-align:right">5.</div>
<div class="a" style="left:469px;top:608px;width:368px;height:17px;border:1px solid #7f7fc4;border-radius:4px;background:#f0f0fd;padding-left:2px;line-height:15px;white-space:nowrap;overflow:hidden">Ausführungsplanung</div>
<div class="a" style="left:837px;top:608px;width:40px;height:17px;border:1px solid #7f7fc4;border-radius:4px;background:#f0f0fd;padding-left:2px;line-height:15px;white-space:nowrap;overflow:hidden">25.0</div>
<div class="a" style="left:880px;top:608px;height:18px;line-height:18px;white-space:nowrap;line-height:17px">% 200355</div>
<svg class="a" style="left:938px;top:608px" width="18" height="17"><defs><radialGradient id="mg" cx="0.45" cy="0.45" r="0.6"><stop offset="0" stop-color="#f4f8fc"/><stop offset="1" stop-color="#c6daf0"/></radialGradient></defs><ellipse cx="7" cy="13.5" rx="5" ry="1.2" fill="#000" opacity="0.05"/><path d="M10.8 9 L15 13" stroke="#959595" stroke-width="2.4" stroke-linecap="round"/><circle cx="6.75" cy="5.3" r="5" fill="none" stroke="#c8c8c8" stroke-width="1"/><circle cx="6.75" cy="5.3" r="4" fill="url(#mg)" stroke="#86acd8" stroke-width="1.1"/></svg>
<div class="a" style="left:981px;top:608px;width:64px;height:17px;border:1px solid #7f7fc4;border-radius:4px;background:#f0f0fd;padding-left:2px;line-height:15px;white-space:nowrap;overflow:hidden">5</div>
<div class="a" style="left:440px;top:632px;width:27px;height:17px;line-height:17px;text-align:right">6.</div>
<div class="a" style="left:469px;top:632px;width:368px;height:17px;border:1px solid #7f7fc4;border-radius:4px;background:#f0f0fd;padding-left:2px;line-height:15px;white-space:nowrap;overflow:hidden">Vorbereitung der Vergabe</div>
<div class="a" style="left:837px;top:632px;width:40px;height:17px;border:1px solid #7f7fc4;border-radius:4px;background:#f0f0fd;padding-left:2px;line-height:15px;white-space:nowrap;overflow:hidden">10.0</div>
<div class="a" style="left:880px;top:632px;height:18px;line-height:18px;white-space:nowrap;line-height:17px">% 200356</div>
<svg class="a" style="left:938px;top:632px" width="18" height="17"><defs><radialGradient id="mg" cx="0.45" cy="0.45" r="0.6"><stop offset="0" stop-color="#f4f8fc"/><stop offset="1" stop-color="#c6daf0"/></radialGradient></defs><ellipse cx="7" cy="13.5" rx="5" ry="1.2" fill="#000" opacity="0.05"/><path d="M10.8 9 L15 13" stroke="#959595" stroke-width="2.4" stroke-linecap="round"/><circle cx="6.75" cy="5.3" r="5" fill="none" stroke="#c8c8c8" stroke-width="1"/><circle cx="6.75" cy="5.3" r="4" fill="url(#mg)" stroke="#86acd8" stroke-width="1.1"/></svg>
<div class="a" style="left:981px;top:632px;width:64px;height:17px;border:1px solid #7f7fc4;border-radius:4px;background:#f0f0fd;padding-left:2px;line-height:15px;white-space:nowrap;overflow:hidden">6</div>
<div class="a" style="left:440px;top:656px;width:27px;height:17px;line-height:17px;text-align:right">7.</div>
<div class="a" style="left:469px;top:656px;width:368px;height:17px;border:1px solid #7f7fc4;border-radius:4px;background:#f0f0fd;padding-left:2px;line-height:15px;white-space:nowrap;overflow:hidden">Mitwirkung bei der Vergabe</div>
<div class="a" style="left:837px;top:656px;width:40px;height:17px;border:1px solid #7f7fc4;border-radius:4px;background:#f0f0fd;padding-left:2px;line-height:15px;white-space:nowrap;overflow:hidden">4.0</div>
<div class="a" style="left:880px;top:656px;height:18px;line-height:18px;white-space:nowrap;line-height:17px">% 200357</div>
<svg class="a" style="left:938px;top:656px" width="18" height="17"><defs><radialGradient id="mg" cx="0.45" cy="0.45" r="0.6"><stop offset="0" stop-color="#f4f8fc"/><stop offset="1" stop-color="#c6daf0"/></radialGradient></defs><ellipse cx="7" cy="13.5" rx="5" ry="1.2" fill="#000" opacity="0.05"/><path d="M10.8 9 L15 13" stroke="#959595" stroke-width="2.4" stroke-linecap="round"/><circle cx="6.75" cy="5.3" r="5" fill="none" stroke="#c8c8c8" stroke-width="1"/><circle cx="6.75" cy="5.3" r="4" fill="url(#mg)" stroke="#86acd8" stroke-width="1.1"/></svg>
<div class="a" style="left:981px;top:656px;width:64px;height:17px;border:1px solid #7f7fc4;border-radius:4px;background:#f0f0fd;padding-left:2px;line-height:15px;white-space:nowrap;overflow:hidden">7</div>
<div class="a" style="left:440px;top:680px;width:27px;height:17px;line-height:17px;text-align:right">8.</div>
<div class="a" style="left:469px;top:680px;width:368px;height:17px;border:1px solid #7f7fc4;border-radius:4px;background:#f0f0fd;padding-left:2px;line-height:15px;white-space:nowrap;overflow:hidden">Objektüberwachung – Bauüberwachung und Dokumentation</div>
<div class="a" style="left:837px;top:680px;width:40px;height:17px;border:1px solid #7f7fc4;border-radius:4px;background:#f0f0fd;padding-left:2px;line-height:15px;white-space:nowrap;overflow:hidden">32.0</div>
<div class="a" style="left:880px;top:680px;height:18px;line-height:18px;white-space:nowrap;line-height:17px">% 200358</div>
<svg class="a" style="left:938px;top:680px" width="18" height="17"><defs><radialGradient id="mg" cx="0.45" cy="0.45" r="0.6"><stop offset="0" stop-color="#f4f8fc"/><stop offset="1" stop-color="#c6daf0"/></radialGradient></defs><ellipse cx="7" cy="13.5" rx="5" ry="1.2" fill="#000" opacity="0.05"/><path d="M10.8 9 L15 13" stroke="#959595" stroke-width="2.4" stroke-linecap="round"/><circle cx="6.75" cy="5.3" r="5" fill="none" stroke="#c8c8c8" stroke-width="1"/><circle cx="6.75" cy="5.3" r="4" fill="url(#mg)" stroke="#86acd8" stroke-width="1.1"/></svg>
<div class="a" style="left:981px;top:680px;width:64px;height:17px;border:1px solid #7f7fc4;border-radius:4px;background:#f0f0fd;padding-left:2px;line-height:15px;white-space:nowrap;overflow:hidden">8</div>
<div class="a" style="left:440px;top:704px;width:27px;height:17px;line-height:17px;text-align:right">9.</div>
<div class="a" style="left:469px;top:704px;width:368px;height:17px;border:1px solid #7f7fc4;border-radius:4px;background:#f0f0fd;padding-left:2px;line-height:15px;white-space:nowrap;overflow:hidden">Objektbetreuung</div>
<div class="a" style="left:837px;top:704px;width:40px;height:17px;border:1px solid #7f7fc4;border-radius:4px;background:#f0f0fd;padding-left:2px;line-height:15px;white-space:nowrap;overflow:hidden">2.0</div>
<div class="a" style="left:880px;top:704px;height:18px;line-height:18px;white-space:nowrap;line-height:17px">% 200359</div>
<svg class="a" style="left:938px;top:704px" width="18" height="17"><defs><radialGradient id="mg" cx="0.45" cy="0.45" r="0.6"><stop offset="0" stop-color="#f4f8fc"/><stop offset="1" stop-color="#c6daf0"/></radialGradient></defs><ellipse cx="7" cy="13.5" rx="5" ry="1.2" fill="#000" opacity="0.05"/><path d="M10.8 9 L15 13" stroke="#959595" stroke-width="2.4" stroke-linecap="round"/><circle cx="6.75" cy="5.3" r="5" fill="none" stroke="#c8c8c8" stroke-width="1"/><circle cx="6.75" cy="5.3" r="4" fill="url(#mg)" stroke="#86acd8" stroke-width="1.1"/></svg>
<div class="a" style="left:981px;top:704px;width:64px;height:17px;border:1px solid #7f7fc4;border-radius:4px;background:#f0f0fd;padding-left:2px;line-height:15px;white-space:nowrap;overflow:hidden">9</div>
<div class="a" style="left:400px;top:726px;width:216px;height:18px;line-height:18px;text-align:right;white-space:nowrap">erstellt am:</div>
<div class="a" style="left:400px;top:745px;width:216px;height:18px;line-height:18px;text-align:right;white-space:nowrap">geändert am:</div>
<div class="a" style="left:619px;top:726px;height:18px;line-height:18px;white-space:nowrap;">05.12.2013 10:22</div>
<div class="a" style="left:619px;top:745px;height:18px;line-height:18px;white-space:nowrap;">05.12.2013 12:15</div>
<div class="a" style="left:800px;top:726px;width:167px;height:18px;line-height:18px;text-align:right;white-space:nowrap">erstellt von:</div>
<div class="a" style="left:800px;top:745px;width:167px;height:18px;line-height:18px;text-align:right;white-space:nowrap">geändert von:</div>
<div class="a" style="left:969px;top:726px;height:18px;line-height:18px;white-space:nowrap;">admindb</div>
<div class="a" style="left:969px;top:745px;height:18px;line-height:18px;white-space:nowrap;">admindb</div>
</body></html>
